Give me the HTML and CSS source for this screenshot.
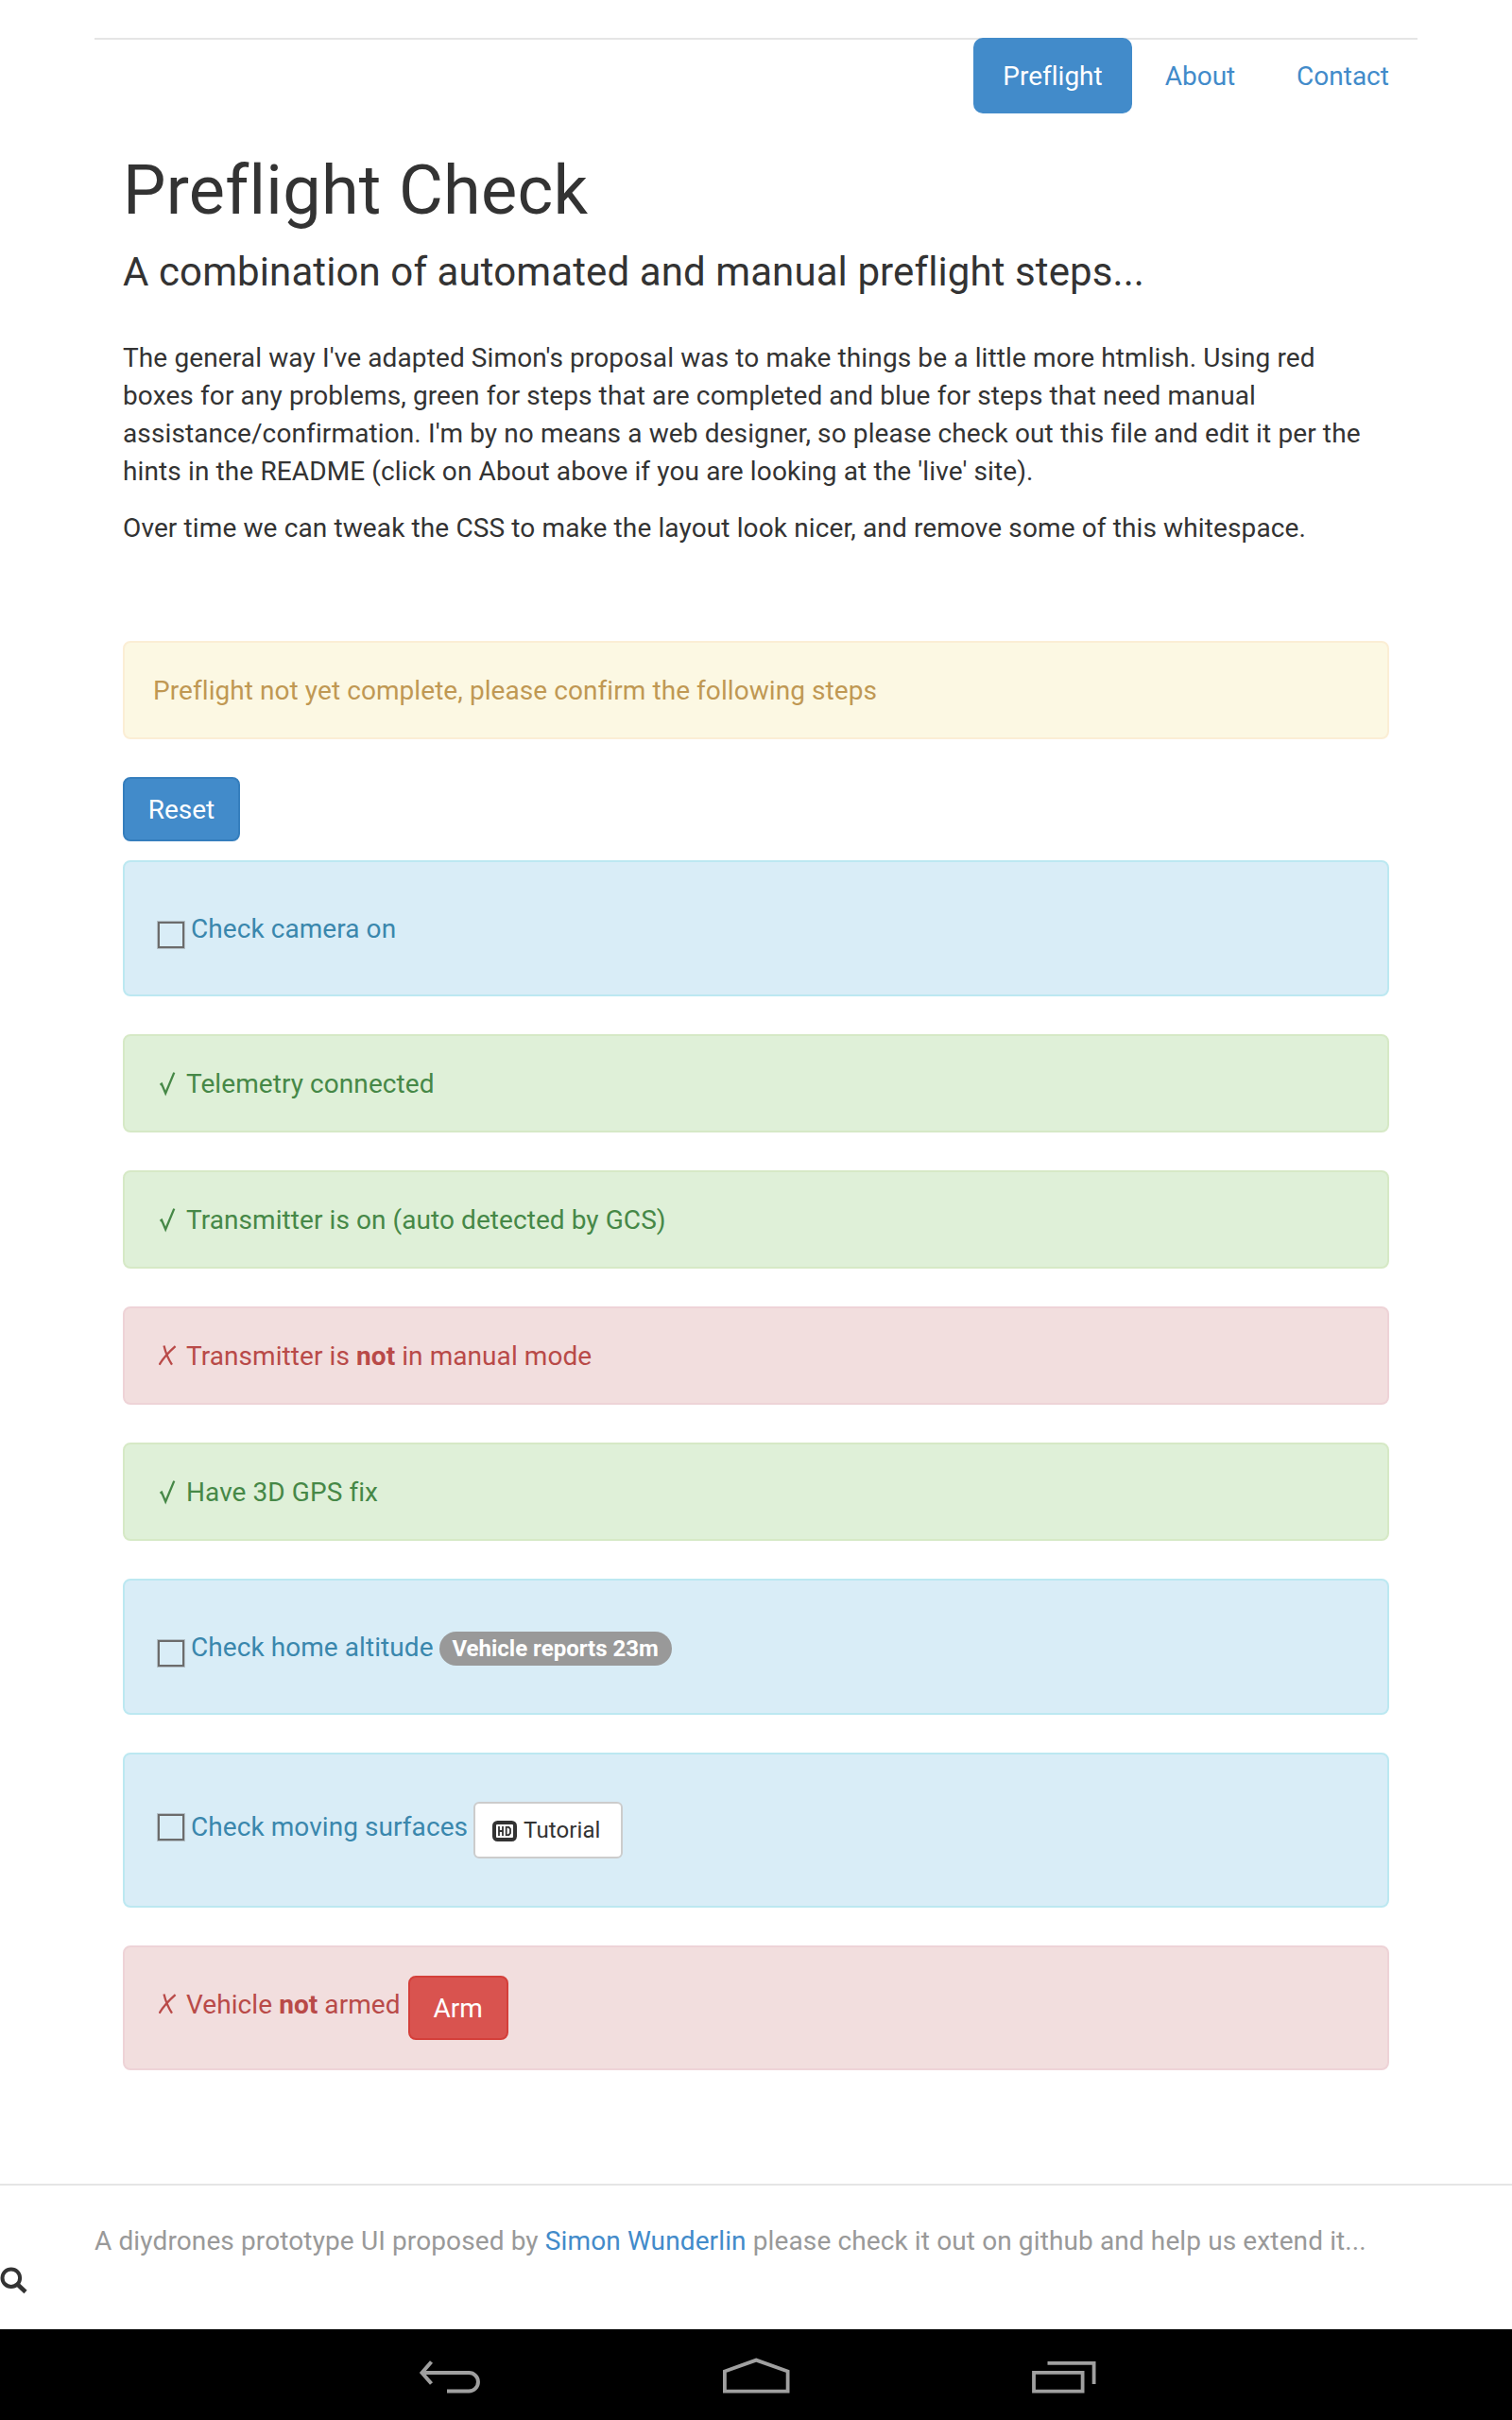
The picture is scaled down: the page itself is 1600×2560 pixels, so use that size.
FILE: index.html
```html
<!DOCTYPE html>
<html lang="en">
<head>
<meta charset="utf-8">
<title>Preflight Check</title>
<link rel="stylesheet" href="styles.css">
</head>
<body>
<svg class="defs" width="0" height="0" aria-hidden="true">
  <symbol id="tick" viewBox="0 0 20 28"><path d="M1.500 14.600 3 13.600 7.200 23.500 16.300 1.600" fill="none" stroke="currentColor" stroke-width="2.300"/></symbol>
  <symbol id="cross" viewBox="0 0 20 28"><path d="M5.500 2.600C7 9 9.500 16 14 22.600M17.600 3.200C11 9 4.500 16 .600 22.800" fill="none" stroke="currentColor" stroke-width="2.300"/></symbol>
</svg>
<div class="page">
  <nav class="nav">
    <a class="nav-link preflight active" href="#">Preflight</a>
    <a class="nav-link about" href="#">About</a>
    <a class="nav-link contact" href="#">Contact</a>
  </nav>
  <main class="content">
    <h1>Preflight Check</h1>
    <h3>A combination of automated and manual preflight steps...</h3>
    <p>The general way I've adapted Simon's proposal was to make things be a little more htmlish. Using red<br>boxes for any problems, green for steps that are completed and blue for steps that need manual<br>assistance/confirmation. I'm by no means a web designer, so please check out this file and edit it per the<br>hints in the README (click on About above if you are looking at the 'live' site).</p>
    <p>Over time we can tweak the CSS to make the layout look nicer, and remove some of this whitespace.</p>
    <div class="alert warning first"><span class="label">Preflight not yet complete, please confirm the following steps</span></div>
    <button class="btn primary">Reset</button>
    <div class="alert info"><span class="box"></span><span class="label">Check camera on</span></div>
    <div class="alert success"><svg class="mark"><use href="#tick"/></svg><span class="label">Telemetry connected</span></div>
    <div class="alert success"><svg class="mark"><use href="#tick"/></svg><span class="label">Transmitter is on (auto detected by GCS)</span></div>
    <div class="alert danger"><svg class="mark"><use href="#cross"/></svg><span class="label">Transmitter is <strong>not</strong> in manual mode</span></div>
    <div class="alert success"><svg class="mark"><use href="#tick"/></svg><span class="label">Have 3D GPS fix</span></div>
    <div class="alert info"><span class="box"></span><span class="label">Check home altitude</span><span class="badge">Vehicle reports 23m</span></div>
    <div class="alert info tall"><span class="box"></span><span class="label">Check moving surfaces</span><button class="btn small"><svg class="hd" viewBox="0 0 26 22"><rect width="26" height="22" rx="5.500" fill="#333"/><rect x="4" y="4" width="18" height="14" rx="1" fill="#fff"/><path d="M7 6v10M11 6v10M7 11h4M14.700 6v10M14 6.900h3.500l1.500 2v4.200l-1.500 2H14" fill="none" stroke="#333" stroke-width="1.800"/></svg>Tutorial</button></div>
    <div class="alert danger arm"><svg class="mark"><use href="#cross"/></svg><span class="label">Vehicle <strong>not</strong> armed</span><button class="btn red">Arm</button></div>
  </main>
</div>
<footer class="footer">
  <p>A diydrones prototype UI proposed by <a href="#">Simon Wunderlin</a> please check it out on github and help us extend it...</p>
</footer>
<svg class="search" viewBox="0 0 30 30"><circle cx="11.800" cy="11.700" r="9.300" fill="none" stroke="#333" stroke-width="4"/><path d="M18.500 18.500 27 26.500" stroke="#333" stroke-width="4.600"/></svg>
<div class="system-bar">
  <svg width="68" height="40" viewBox="0 0 68 40" fill="none" stroke="#a0a0a0" stroke-width="4"><path d="M14.500 4.500 4.500 16 14.500 27.500M4 16H54.200A9.750 9.750 0 0 1 54.200 35.500H31"/></svg>
  <svg width="73" height="40" viewBox="0 0 73 40" fill="none" stroke="#a0a0a0" stroke-width="3.800"><path d="M2.900 35.600V14.500L36.200 2.600 69.600 14.500V35.600Z"/></svg>
  <svg width="72" height="40" viewBox="0 0 72 40" fill="none" stroke="#a0a0a0" stroke-width="3.800"><path d="M4 15.800H55.600V35.600H4ZM18.500 5.900H67.600V28"/></svg>
</div>
</body>
</html>
```
FILE: styles.css
```css
* { box-sizing: border-box; }
body {
  margin: 0;
  height: 2560px;
  display: flex;
  flex-direction: column;
  background: #fff;
  color: #333;
  font: 28px/40px Roboto, sans-serif;
  font-variant-ligatures: none;
}
a { color: #428bca; text-decoration: none; }
.defs { position: absolute; }
.page { width: 1400px; margin: 40px auto 0; }
.nav {
  display: flex;
  justify-content: flex-end;
  gap: 4px;
  height: 80px;
  background: linear-gradient(#e5e5e5, #e5e5e5) no-repeat 0 0 / 100% 2px;
}
.nav-link { padding-top: 21px; border-radius: 10px; text-align: center; }
.preflight { width: 168px; }
.about { width: 136px; }
.contact { width: 158px; }
.active { background: #428bca; color: #fff; }
.content { padding: 0 30px; }
h1 { margin: 42px 0 0; font-size: 72px; line-height: 80px; font-weight: 400; letter-spacing: .3px; }
h3 { margin: 23px 0 48px; font-size: 42px; line-height: 46px; font-weight: 400; letter-spacing: .1px; }
p { margin: 0 0 20px; white-space: nowrap; letter-spacing: .12px; }
.alert {
  display: flex;
  align-items: flex-start;
  height: 104px;
  margin-bottom: 40px;
  padding: 30px;
  border: 2px solid;
  border-radius: 8px;
  white-space: nowrap;
}
.label { margin-top: 1px; letter-spacing: .07px; }
.first { margin-top: 99px; }
.warning { background: #fcf8e3; border-color: #fbeed5; color: #c09853; }
.info { height: 144px; padding-top: 50px; background: #d9edf7; border-color: #bce8f1; color: #3a87ad; }
.success { background: #dff0d8; border-color: #d6e9c6; color: #468847; }
.danger { background: #f2dede; border-color: #eed3d7; color: #b94a48; }
.tall { height: 164px; }
.tall .label { margin-top: 7px; }
.arm { height: 132px; }
.arm .label { margin-top: 11px; }
.mark { width: 20px; height: 28px; margin: 7px 9px 0 6px; flex: none; }
.arm .mark { margin-top: 17px; }
.box {
  width: 28px;
  height: 28px;
  margin: 13px 7px 0 5px;
  border: 2px solid #6c6c6c;
  box-shadow: 0 0 0 1px rgba(108, 108, 108, .35);
  flex: none;
}
.btn {
  display: block;
  height: 68px;
  padding: 2px 0 0;
  border: 2px solid;
  border-radius: 8px;
  font: 28px/40px Roboto, sans-serif;
  color: #fff;
}
.primary { width: 124px; margin-bottom: 20px; background: #428bca; border-color: #357ebd; }
.badge {
  width: 246px;
  height: 36px;
  margin: 4px 0 0 6px;
  border-radius: 18px;
  background: #999;
  color: #fff;
  font-size: 24px;
  line-height: 36px;
  font-weight: 700;
  text-align: center;
}
.small {
  display: flex;
  align-items: center;
  justify-content: flex-start;
  width: 158px;
  height: 60px;
  margin-left: 6px;
  padding: 0 18px;
  background: #fff;
  border-color: #ccc;
  border-radius: 6px;
  font-size: 24px;
  letter-spacing: .1px;
  color: #333;
}
.hd { width: 26px; height: 22px; margin: 2px 7px 0 0; flex: none; }
.red { width: 106px; margin-left: 8px; background: #d9534f; border-color: #d43f3a; }
.footer { margin-top: 80px; padding: 39px 100px 0; border-top: 2px solid #e5e5e5; color: #999; }
.footer p { margin: 0; }
.search { width: 30px; height: 30px; margin-top: 7px; flex: none; }
.system-bar {
  display: flex;
  justify-content: space-between;
  height: 96px;
  margin-top: auto;
  padding: 30px 438px 0 442px;
  background: #000;
  flex: none;
}
```
